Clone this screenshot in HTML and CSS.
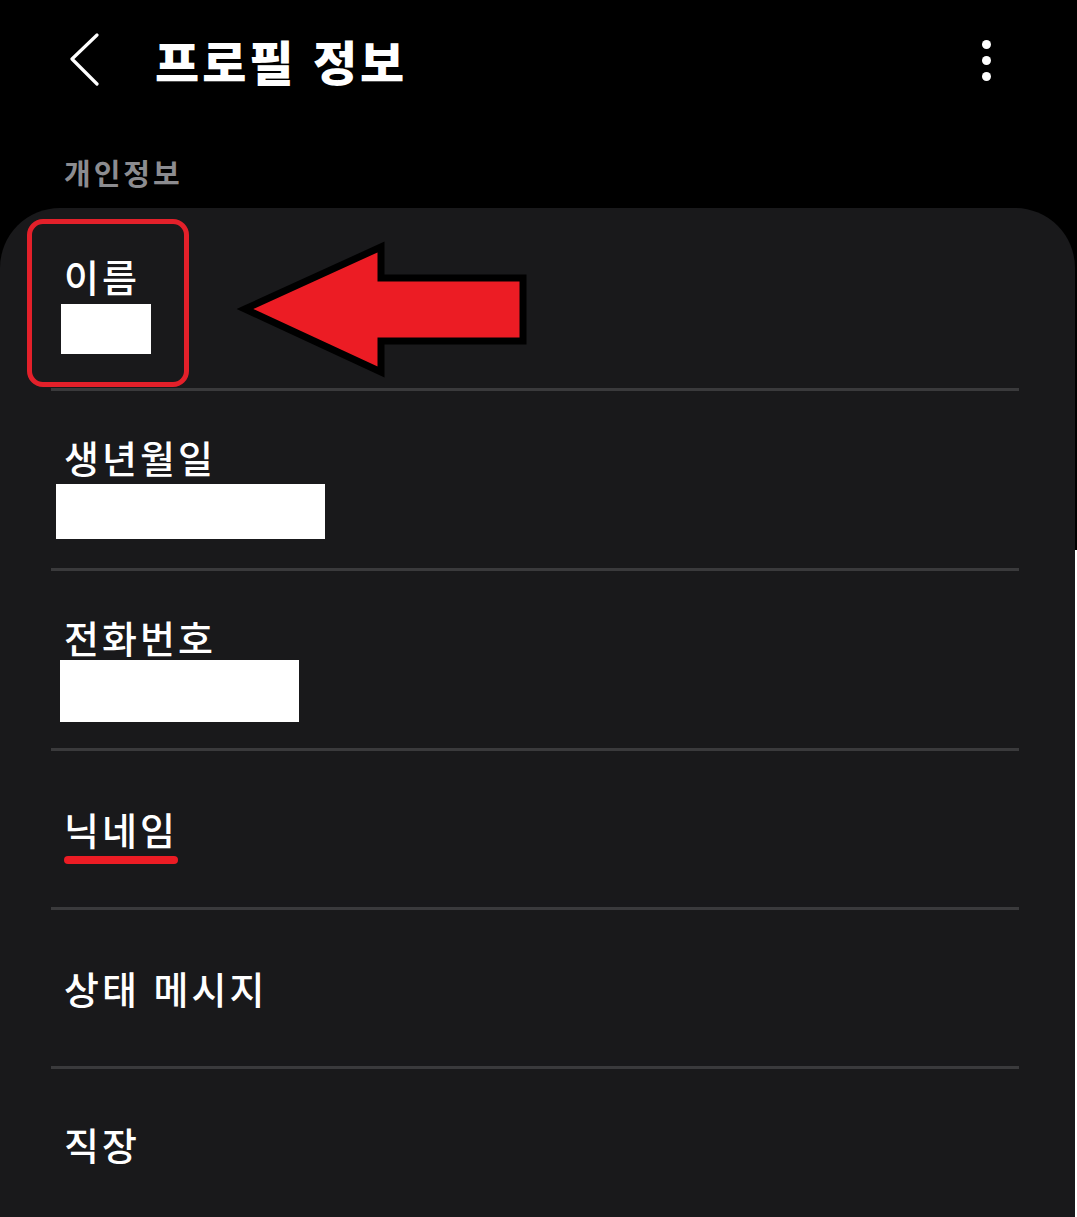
FILE: index.html
```html
<!DOCTYPE html>
<html lang="ko">
<head>
<meta charset="utf-8">
<title>프로필 정보</title>
<link rel="stylesheet" href="styles.css">
</head>
<body>
<header class="appbar">
  <button class="back" aria-label="뒤로">
    <svg width="30" height="54" viewBox="0 0 30 54"><polyline points="27,2 2,26 27,51" fill="none" stroke="#fff" stroke-width="3.2" stroke-linecap="round" stroke-linejoin="round"/></svg>
  </button>
  <h1 class="title">프로필 정보</h1>
  <button class="more" aria-label="더보기">
    <span class="dot"></span><span class="dot"></span><span class="dot"></span>
  </button>
</header>
<div class="section-label">개인정보</div>
<main class="card">
  <div class="row row-name">
    <div class="label">이름</div>
    <div class="mask mask-name"></div>
    <div class="highlight-box"></div>
    <svg class="arrow" width="300" height="150" viewBox="236 236 300 150">
      <polygon points="245,309 381,247 381,278 523,278 523,341 381,341 381,372" fill="#ec1c24" stroke="#000" stroke-width="7" stroke-linejoin="miter"/>
    </svg>
  </div>
  <div class="divider"></div>
  <div class="row row-birth">
    <div class="label">생년월일</div>
    <div class="mask mask-birth"></div>
  </div>
  <div class="divider"></div>
  <div class="row row-phone">
    <div class="label">전화번호</div>
    <div class="mask mask-phone"></div>
  </div>
  <div class="divider"></div>
  <div class="row row-single">
    <div class="label underlined">닉네임</div>
  </div>
  <div class="divider"></div>
  <div class="row row-single">
    <div class="label">상태 메시지</div>
  </div>
  <div class="divider"></div>
  <div class="row row-last">
    <div class="label">직장</div>
  </div>
</main>
</body>
</html>
```
FILE: styles.css
```css
html {
  background: linear-gradient(to bottom, #000 0, #000 550px, #fff 550px);
  min-height: 100%;
}
body {
  margin: 0;
  font-family: "Noto Sans CJK KR", "Noto Sans", sans-serif;
  color: #fff;
  overflow: hidden;
  height: 1217px;
}
.appbar {
  height: 120px;
  display: flex;
  align-items: center;
  background: #000;
}
.back {
  margin-left: 70px;
  width: 30px;
  height: 54px;
  padding: 0;
  border: 0;
  background: none;
  display: flex;
}
.title {
  margin: 0 0 0 55px;
  font-size: 48px;
  font-weight: 900;
  line-height: 1;
  letter-spacing: 3px;
  color: #fff;
}
.more {
  margin-left: auto;
  margin-right: 86px;
  padding: 0;
  border: 0;
  background: none;
  display: flex;
  flex-direction: column;
  gap: 7px;
}
.dot {
  width: 9px;
  height: 9px;
  border-radius: 50%;
  background: #fff;
}
.section-label {
  background: #000;
  padding: 34px 0 0 64px;
  height: 88px;
  box-sizing: border-box;
  font-size: 29px;
  font-weight: 700;
  line-height: 36px;
  letter-spacing: 3px;
  color: #8c8c90;
}
.card {
  width: 1075px;
  background: #19191b;
  border-radius: 60px 60px 0 0;
}
.row {
  position: relative;
  padding-left: 64px;
}
.label {
  font-size: 38px;
  font-weight: 500;
  line-height: 46px;
  letter-spacing: 3px;
  color: #fff;
  position: relative;
  width: max-content;
}
.mask {
  background: #fff;
}
.row-name { padding-top: 45px; padding-bottom: 34px; }
.mask-name { width: 90px; height: 50px; margin: 5px 0 0 -3px; }
.row-birth { padding-top: 43px; padding-bottom: 29px; }
.mask-birth { width: 269px; height: 55px; margin: 4px 0 0 -8px; }
.row-phone { padding-top: 43px; padding-bottom: 26px; }
.mask-phone { width: 239px; height: 62px; margin: 0 0 0 -4px; }
.row-single {
  height: 156px;
  display: flex;
  align-items: center;
}
.row-last {
  height: 149px;
  display: flex;
  align-items: center;
}
.divider {
  height: 3px;
  margin: 0 56px 0 51px;
  background: #3a3a3c;
}
.highlight-box {
  position: absolute;
  left: 27px;
  top: 11px;
  width: 152px;
  height: 158px;
  border: 5px solid #e3202a;
  border-radius: 16px;
}
.arrow {
  position: absolute;
  left: 236px;
  top: 28px;
}
.underlined::after {
  content: "";
  position: absolute;
  left: 0;
  right: 0;
  bottom: -12px;
  height: 8px;
  border-radius: 4px;
  background: #ec1c24;
}
```
